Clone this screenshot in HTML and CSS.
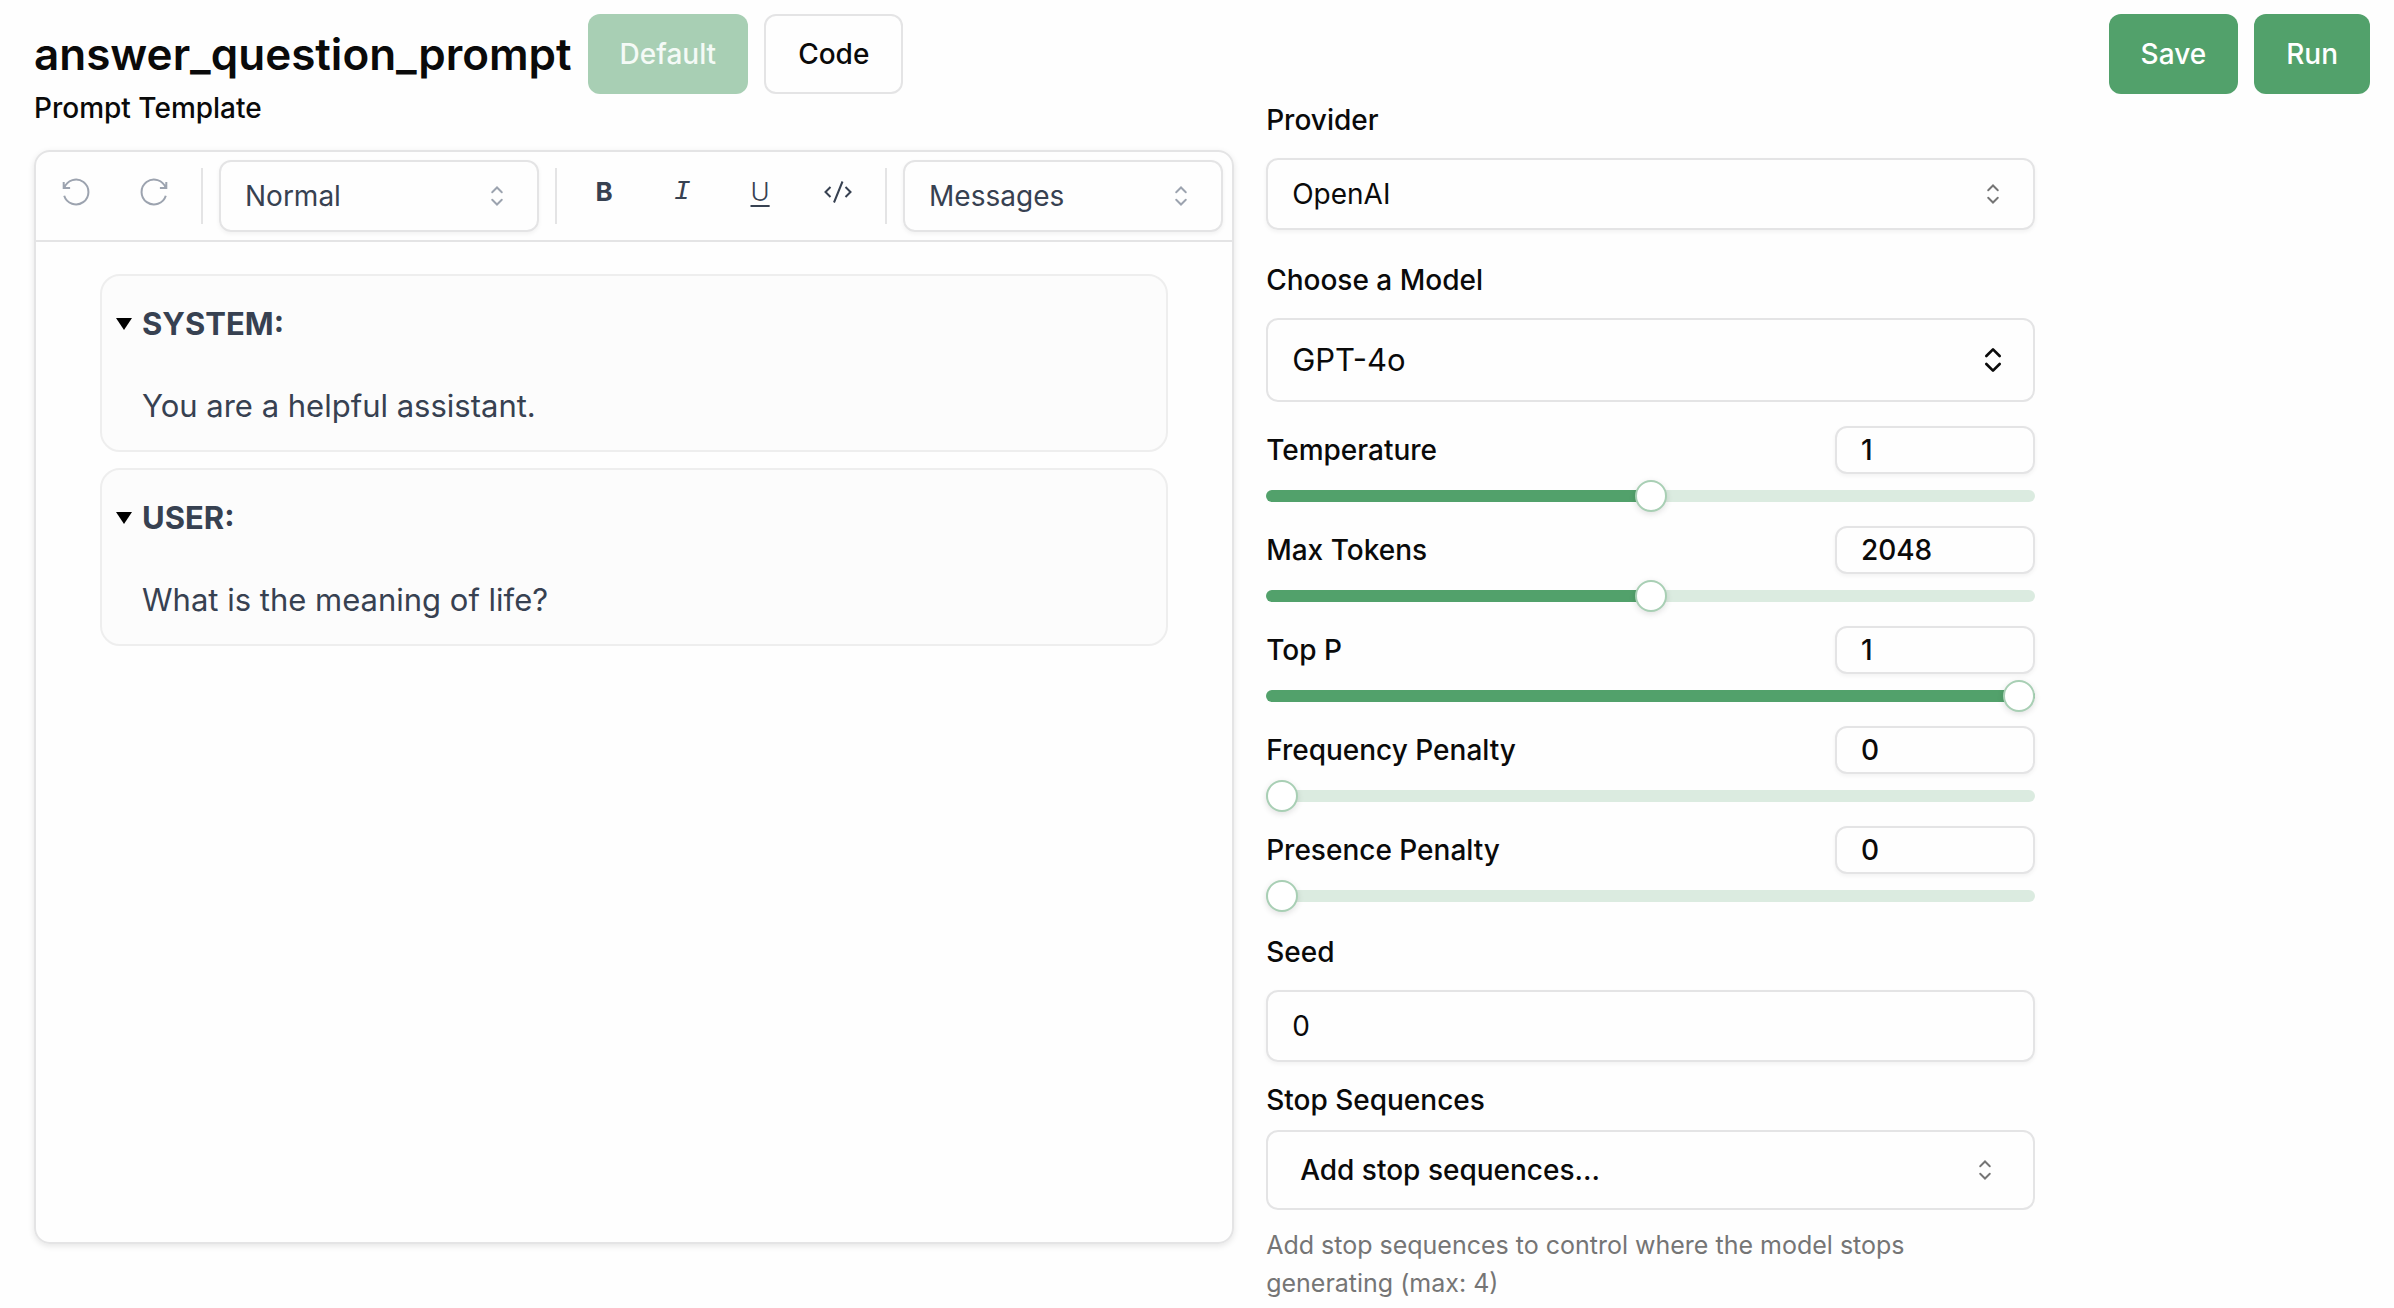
FILE: index.html
```html
<!DOCTYPE html>
<html lang="en">
<head>
<meta charset="utf-8">
<meta name="viewport" content="width=device-width, initial-scale=1">
<title>answer_question_prompt</title>
<link rel="stylesheet" href="styles.css">
</head>
<body>
<svg class="sprite" aria-hidden="true">
  <symbol id="caret-sort" viewBox="0 0 15 15"><path d="M5.25 5.75 7.5 3.5l2.25 2.25M5.25 9.25 7.5 11.5l2.25-2.25" fill="none" stroke="currentColor" stroke-width=".9" stroke-linecap="round"/></symbol>
  <symbol id="chevrons" viewBox="0 0 24 24"><path d="m7 15 5 5 5-5M7 9l5-5 5 5" fill="none" stroke="currentColor" stroke-width="2" stroke-linecap="round" stroke-linejoin="round"/></symbol>
</svg>

<header class="topbar">
  <h1 class="title">answer_question_prompt</h1>
  <button class="btn btn-primary" type="button" disabled>Default</button>
  <button class="btn btn-outline" type="button">Code</button>
  <div class="actions">
    <button class="btn btn-primary" type="button">Save</button>
    <button class="btn btn-primary" type="button">Run</button>
  </div>
</header>

<main class="layout">
  <section class="template" aria-labelledby="template-label">
    <h2 class="label" id="template-label">Prompt Template</h2>
    <div class="editor">
      <div class="toolbar" role="toolbar" aria-label="Formatting">
        <button class="tool tool-muted" type="button" aria-label="Undo"><svg viewBox="0 0 32 32"><path d="M3.7 6v6h6.4M4.3 12A12.4 12.4 0 1 1 4.2 19.7"/></svg></button>
        <button class="tool tool-muted" type="button" aria-label="Redo"><svg viewBox="0 0 32 32"><path d="M28.3 6v6h-6.4M27.7 12A12.4 12.4 0 1 0 27.8 19.7"/></svg></button>
        <span class="divider"></span>
        <div class="select">
          <select aria-label="Block type"><option>Normal</option></select>
          <svg class="caret"><use href="#caret-sort"/></svg>
        </div>
        <span class="divider"></span>
        <button class="tool bold" type="button" aria-label="Bold">B</button>
        <button class="tool italic" type="button" aria-label="Italic">I</button>
        <button class="tool underline" type="button" aria-label="Underline">U</button>
        <button class="tool" type="button" aria-label="Code"><svg viewBox="0 0 32 32"><path d="M20.5 5.5 12 26.5M8.5 11 3.5 16l5 5M23.5 11l5 5-5 5"/></svg></button>
        <span class="divider"></span>
        <div class="select">
          <select aria-label="Insert"><option>Messages</option></select>
          <svg class="caret"><use href="#caret-sort"/></svg>
        </div>
      </div>
      <div class="document">
        <details class="message" open>
          <summary>SYSTEM:</summary>
          <p>You are a helpful assistant.</p>
        </details>
        <details class="message" open>
          <summary>USER:</summary>
          <p>What is the meaning of life?</p>
        </details>
      </div>
    </div>
  </section>

  <form class="settings">
    <div class="field">
      <label class="label" for="provider">Provider</label>
      <div class="select">
        <select id="provider"><option>OpenAI</option></select>
        <svg class="caret"><use href="#caret-sort"/></svg>
      </div>
    </div>
    <div class="field">
      <label class="label" for="model">Choose a Model</label>
      <div class="select select-large">
        <select id="model"><option>GPT-4o</option></select>
        <svg class="caret"><use href="#chevrons"/></svg>
      </div>
    </div>

    <div class="sliders">
      <div class="slider">
        <label class="label" for="temperature">Temperature</label>
        <input class="number" type="text" inputmode="decimal" value="1" aria-label="Temperature value">
        <input class="range" id="temperature" type="range" min="0" max="2" step="0.01" value="1" style="--fill: 50%">
      </div>
      <div class="slider">
        <label class="label" for="max-tokens">Max Tokens</label>
        <input class="number" type="text" inputmode="numeric" value="2048" aria-label="Max Tokens value">
        <input class="range" id="max-tokens" type="range" min="0" max="4096" value="2048" style="--fill: 50%">
      </div>
      <div class="slider">
        <label class="label" for="top-p">Top P</label>
        <input class="number" type="text" inputmode="decimal" value="1" aria-label="Top P value">
        <input class="range" id="top-p" type="range" min="0" max="1" step="0.01" value="1" style="--fill: 100%">
      </div>
      <div class="slider">
        <label class="label" for="frequency">Frequency Penalty</label>
        <input class="number" type="text" inputmode="decimal" value="0" aria-label="Frequency Penalty value">
        <input class="range" id="frequency" type="range" min="0" max="2" step="0.01" value="0" style="--fill: 0%">
      </div>
      <div class="slider">
        <label class="label" for="presence">Presence Penalty</label>
        <input class="number" type="text" inputmode="decimal" value="0" aria-label="Presence Penalty value">
        <input class="range" id="presence" type="range" min="0" max="2" step="0.01" value="0" style="--fill: 0%">
      </div>
    </div>

    <div class="field">
      <label class="label" for="seed">Seed</label>
      <input class="text-input" id="seed" type="text" inputmode="numeric" value="0">
    </div>
    <div class="field field-tight">
      <label class="label" for="stop">Stop Sequences</label>
      <button class="combo" id="stop" type="button">Add stop sequences...<svg class="caret"><use href="#caret-sort"/></svg></button>
      <p class="help">Add stop sequences to control where the model stops generating (max: 4)</p>
    </div>
  </form>
</main>
</body>
</html>
```
FILE: styles.css
```css
:root {
  --green: #52a16b;
  --green-soft: #a8cfb4;
  --green-pale: #dbebe0;
  --line: #e4e4e5;
  --ink: #0a0a0a;
  --slate: #374151;
  --muted: #757575;
  --page: #fefefe;
}

* { box-sizing: border-box; margin: 0; }

body {
  display: flex;
  flex-direction: column;
  min-height: 100vh;
  background: var(--page);
  color: var(--ink);
  font: 400 28px/40px Inter, "Liberation Sans", sans-serif;
}

button, input, select { font: inherit; color: inherit; }

.sprite { position: absolute; width: 0; height: 0; }

.topbar {
  display: flex;
  align-items: center;
  gap: 16px;
  padding: 14px 24px 0 34px;
}
.title { font-size: 44px; line-height: 56px; font-weight: 600; }
.actions { display: flex; gap: 16px; margin-left: auto; }

.btn {
  height: 80px;
  padding: 0 32px;
  border: 0;
  border-radius: 12px;
  font-weight: 500;
}
.btn-primary { background: var(--green); color: #fff; }
.btn-primary:disabled { background: var(--green-soft); color: #f4faf6; }
.btn-outline { background: var(--page); border: 2px solid var(--line); }

.layout {
  flex: 1;
  display: grid;
  grid-template-columns: 1199fr 768fr;
  gap: 32px;
  padding: 0 15% 0 34px;
}

.label { font-size: 28px; line-height: 28px; font-weight: 500; }

.template {
  display: flex;
  flex-direction: column;
  gap: 28px;
  padding-bottom: 64px;
}
.editor {
  flex: 1;
  border: 2px solid var(--line);
  border-radius: 16px;
  box-shadow: 0 2px 6px rgba(0, 0, 0, .1);
}
.toolbar {
  display: flex;
  gap: 16px;
  padding: 8px 9px;
  border-bottom: 2px solid var(--line);
  color: var(--slate);
}
.tool {
  display: flex;
  align-items: center;
  justify-content: center;
  width: 62px;
  height: 64px;
  padding: 0;
  border: 0;
  background: none;
  font-size: 26px;
}
.tool svg {
  width: 32px;
  height: 32px;
  fill: none;
  stroke: currentColor;
  stroke-width: 2;
}
.tool-muted { color: #9ca3af; }
.bold { font-weight: 700; }
.italic { font-family: "Liberation Mono", monospace; font-size: 28px; font-style: italic; }
.underline {
  font-weight: 300;
  text-decoration: underline;
  text-decoration-thickness: 2px;
  text-underline-offset: 4px;
}
.divider { flex: none; width: 2px; height: 56px; margin-top: 8px; background: var(--line); }

.select { display: grid; align-items: center; }
.select > * { grid-area: 1 / 1; }
.select select {
  width: 100%;
  height: 72px;
  padding: 0 72px 0 24px;
  appearance: none;
  border: 2px solid var(--line);
  border-radius: 12px;
  background: transparent;
  box-shadow: 0 2px 4px rgba(0, 0, 0, .05);
}
.toolbar .select { flex: 1; }
.caret {
  width: 32px;
  height: 32px;
  margin-right: 26px;
  justify-self: end;
  color: var(--muted);
  pointer-events: none;
}
.toolbar .caret { color: #9ca3af; }
.select-large select { height: 84px; font-size: 31px; box-shadow: none; }
.select-large .caret { color: var(--ink); }

.document {
  display: flex;
  flex-direction: column;
  gap: 16px;
  padding: 32px 64px;
}
.message {
  padding: 28px 14px 24px;
  border: 2px solid #eee;
  border-radius: 20px;
  background: #fcfcfc;
  color: var(--slate);
  font-size: 31px;
}
.message summary {
  display: flex;
  align-items: center;
  gap: 10px;
  font-weight: 700;
  line-height: 40px;
}
.message summary::before {
  content: "";
  border: 8px solid transparent;
  border-top: 12px solid #000;
  border-bottom: 0;
}
.message p { margin-top: 42px; padding-left: 26px; }

.settings {
  display: flex;
  flex-direction: column;
  gap: 24px;
  padding-top: 12px;
}
.field { display: grid; gap: 24px; }
.field + .field { margin-top: 12px; }
.settings .field-tight { gap: 16px; margin-top: 0; }

.sliders { display: grid; gap: 14px; padding-bottom: 2px; }
.slider {
  display: grid;
  grid-template-columns: 1fr 200px;
  align-items: center;
  row-gap: 6px;
}
.number, .text-input {
  width: 100%;
  height: 72px;
  padding: 0 24px;
  border: 2px solid var(--line);
  border-radius: 12px;
  background: var(--page);
  box-shadow: 0 2px 4px rgba(0, 0, 0, .05);
}
.number { height: 48px; font-weight: 500; }

.range {
  grid-column: 1 / -1;
  width: 100%;
  height: 32px;
  margin: 0;
  appearance: none;
  background: none;
}
.range::-webkit-slider-runnable-track {
  height: 12px;
  border-radius: 6px;
  background: linear-gradient(to right, var(--green) var(--fill), var(--green-pale) var(--fill));
}
.range::-webkit-slider-thumb {
  appearance: none;
  width: 32px;
  height: 32px;
  margin-top: -10px;
  border: 2px solid var(--green-soft);
  border-radius: 50%;
  background: #fff;
  box-shadow: 0 2px 6px rgba(0, 0, 0, .12);
}

.combo {
  display: flex;
  align-items: center;
  justify-content: space-between;
  height: 80px;
  padding: 0 6px 0 32px;
  border: 2px solid var(--line);
  border-radius: 12px;
  background: var(--page);
  font-weight: 500;
}
.help { color: var(--muted); font-size: 25px; line-height: 38px; }
```
